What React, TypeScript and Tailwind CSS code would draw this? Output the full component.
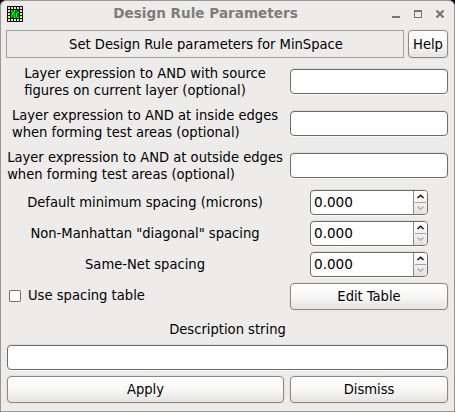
import type { ReactNode } from "react";

const dots = [1, 4, 7, 10, 13];
const glyph = ["10010000", "10010000", "01100011", "01100100", "01100100", "10010100", "10010100", "00010011"];

function AppIcon() {
  return (
    <svg width="16" height="16" viewBox="0 0 16 16" shapeRendering="crispEdges">
      <rect width="16" height="16" fill="#000080" />
      {dots.map((x) =>
        dots.map((y) =>
          x === 1 || x === 13 || y === 1 || y === 13 ? (
            <rect key={`${x}-${y}`} x={x} y={y} width="2" height="2" fill="#ffff00" />
          ) : null
        )
      )}
      <rect x="4" y="4" width="8" height="8" fill="#008000" />
      {glyph.map((row, y) =>
        [...row].map((c, x) =>
          c === "1" ? <rect key={`${x}-${y}`} x={x + 4} y={y + 4} width="1" height="1" fill="#00ff00" /> : null
        )
      )}
    </svg>
  );
}

function Button({ children, className }: { children: ReactNode; className: string }) {
  return (
    <button
      className={`flex items-center justify-center rounded-[4px] border border-[#8b8885] bg-linear-to-b from-white via-[#f8f8f7] to-[#e4e3e1] pb-[2px] shadow-[0_0_0_1px_#e3e2e0] ${className}`}
    >
      {children}
    </button>
  );
}

function Entry({ className, label }: { className: string; label: string }) {
  return (
    <input
      aria-label={label}
      className={`block h-[25px] rounded-[4px] border border-[#6c6c6c] bg-white shadow-[0_-1px_0_0_#dddcda,0_1px_0_0_#f8f8f7] outline-none ${className}`}
    />
  );
}

function Expression({ first, second }: { first: string; second: string }) {
  return (
    <div className="flex h-[42px] items-center">
      <div className="flex w-[277px] shrink-0 justify-center pr-px whitespace-nowrap">
        <div>
          <div>{first}</div>
          <div>{second}</div>
        </div>
      </div>
      <Entry label={first} className="mt-[9px] ml-[6px] w-[158px] self-start" />
    </div>
  );
}

function Spacing({ label }: { label: string }) {
  return (
    <div className="flex h-[31px] items-center">
      <div className="w-[277px] shrink-0 pr-px text-center">{label}</div>
      <div className="mt-[4px] ml-[26px] flex h-[25px] w-[118px] self-start overflow-hidden rounded-[4px] border border-[#6c6c6c] bg-white shadow-[0_-1px_0_0_#dddcda,0_1px_0_0_#f8f8f7]">
        <div className="flex flex-1 items-center pl-[3px] font-['DejaVu_Sans',sans-serif] text-[13.6px] font-normal [font-stretch:normal]">
          0.000
        </div>
        <div className="w-[14px] border-l border-[#8b8885] bg-linear-to-b from-white to-[#e4e3e1]">
          <svg width="13" height="23" viewBox="0 0 13 23" fill="none">
            <path d="M3.5 7 L6.5 4.2 L9.5 7" stroke="#111" strokeWidth="1.5" />
            <path d="M1 11.5 H12" stroke="#a5a3a1" />
            <path d="M3.5 15.5 L6.5 18.3 L9.5 15.5" stroke="#b0afad" strokeWidth="1.5" />
          </svg>
        </div>
      </div>
    </div>
  );
}

export default function App() {
  return (
    <div className="h-[412px] w-[455px] overflow-hidden bg-black">
      <div className="flex h-[412px] w-[455px] flex-col rounded-t-[6px] border-x border-t-[1px] border-b border-[#999795] bg-[#edecea] px-[6px] font-['DejaVu_Sans_Condensed','DejaVu_Sans',sans-serif] text-[14.6px] leading-[17px] text-black [font-stretch:condensed]">
        <div className="flex h-[29px] shrink-0 items-center">
          <div className="-mt-[3px]">
            <AppIcon />
          </div>
          <div className="-mt-[5px] flex-1 pr-[4px] text-center text-[13.6px] font-bold text-[#7f7d7a] [font-stretch:normal] font-['DejaVu_Sans',sans-serif]">
            Design Rule Parameters
          </div>
          <svg width="54" height="12" viewBox="0 0 54 12" fill="none" stroke="#777572" className="-mt-[3px] mr-[2px]" shapeRendering="crispEdges">
            <path d="M0 9 H8" strokeWidth="2" />
            <path d="M22.5 2.5 H29.5 V9.5 H22.5 Z M22 3.5 H30" />
            <path d="M44.5 2.5 L51.5 9.5 M51.5 2.5 L44.5 9.5" strokeWidth="2.2" shapeRendering="auto" />
          </svg>
        </div>
        <div className="flex h-[28px] shrink-0">
          <div className="-ml-px flex w-[398px] items-center justify-center border border-[#a3a19f] pb-[2px] pl-[2px]">
            Set Design Rule parameters for MinSpace
          </div>
          <Button className="ml-[4px] h-[28px] w-[40px]">Help</Button>
        </div>
        <div className="mt-[2px]">
          <Expression first="Layer expression to AND with source" second="figures on current layer (optional)" />
          <Expression first="Layer expression to AND at inside edges" second="when forming test areas (optional)" />
          <Expression first="Layer expression to AND at outside edges" second="when forming test areas (optional)" />
        </div>
        <Spacing label="Default minimum spacing (microns)" />
        <Spacing label={'Non-Manhattan "diagonal" spacing'} />
        <Spacing label="Same-Net spacing" />
        <div className="mt-[4px] flex h-[27px] shrink-0 items-center">
          <label className="flex w-[283px] items-center pl-[2px]">
            <span className="-mt-px mr-[7px] h-[12px] w-[12px] rounded-[1px] border border-[#777573] bg-white" />
            <span className="-mt-[5px]">Use spacing table</span>
          </label>
          <Button className="h-[27px] w-[158px]">Edit Table</Button>
        </div>
        <div className="flex h-[35px] shrink-0 items-center justify-center pt-[2px]">Description string</div>
        <Entry label="Description string" className="w-[441px] shrink-0" />
        <div className="mt-[6px] flex gap-[6px]">
          <Button className="h-[27px] w-[277px]">Apply</Button>
          <Button className="h-[27px] w-[158px]">Dismiss</Button>
        </div>
      </div>
    </div>
  );
}
